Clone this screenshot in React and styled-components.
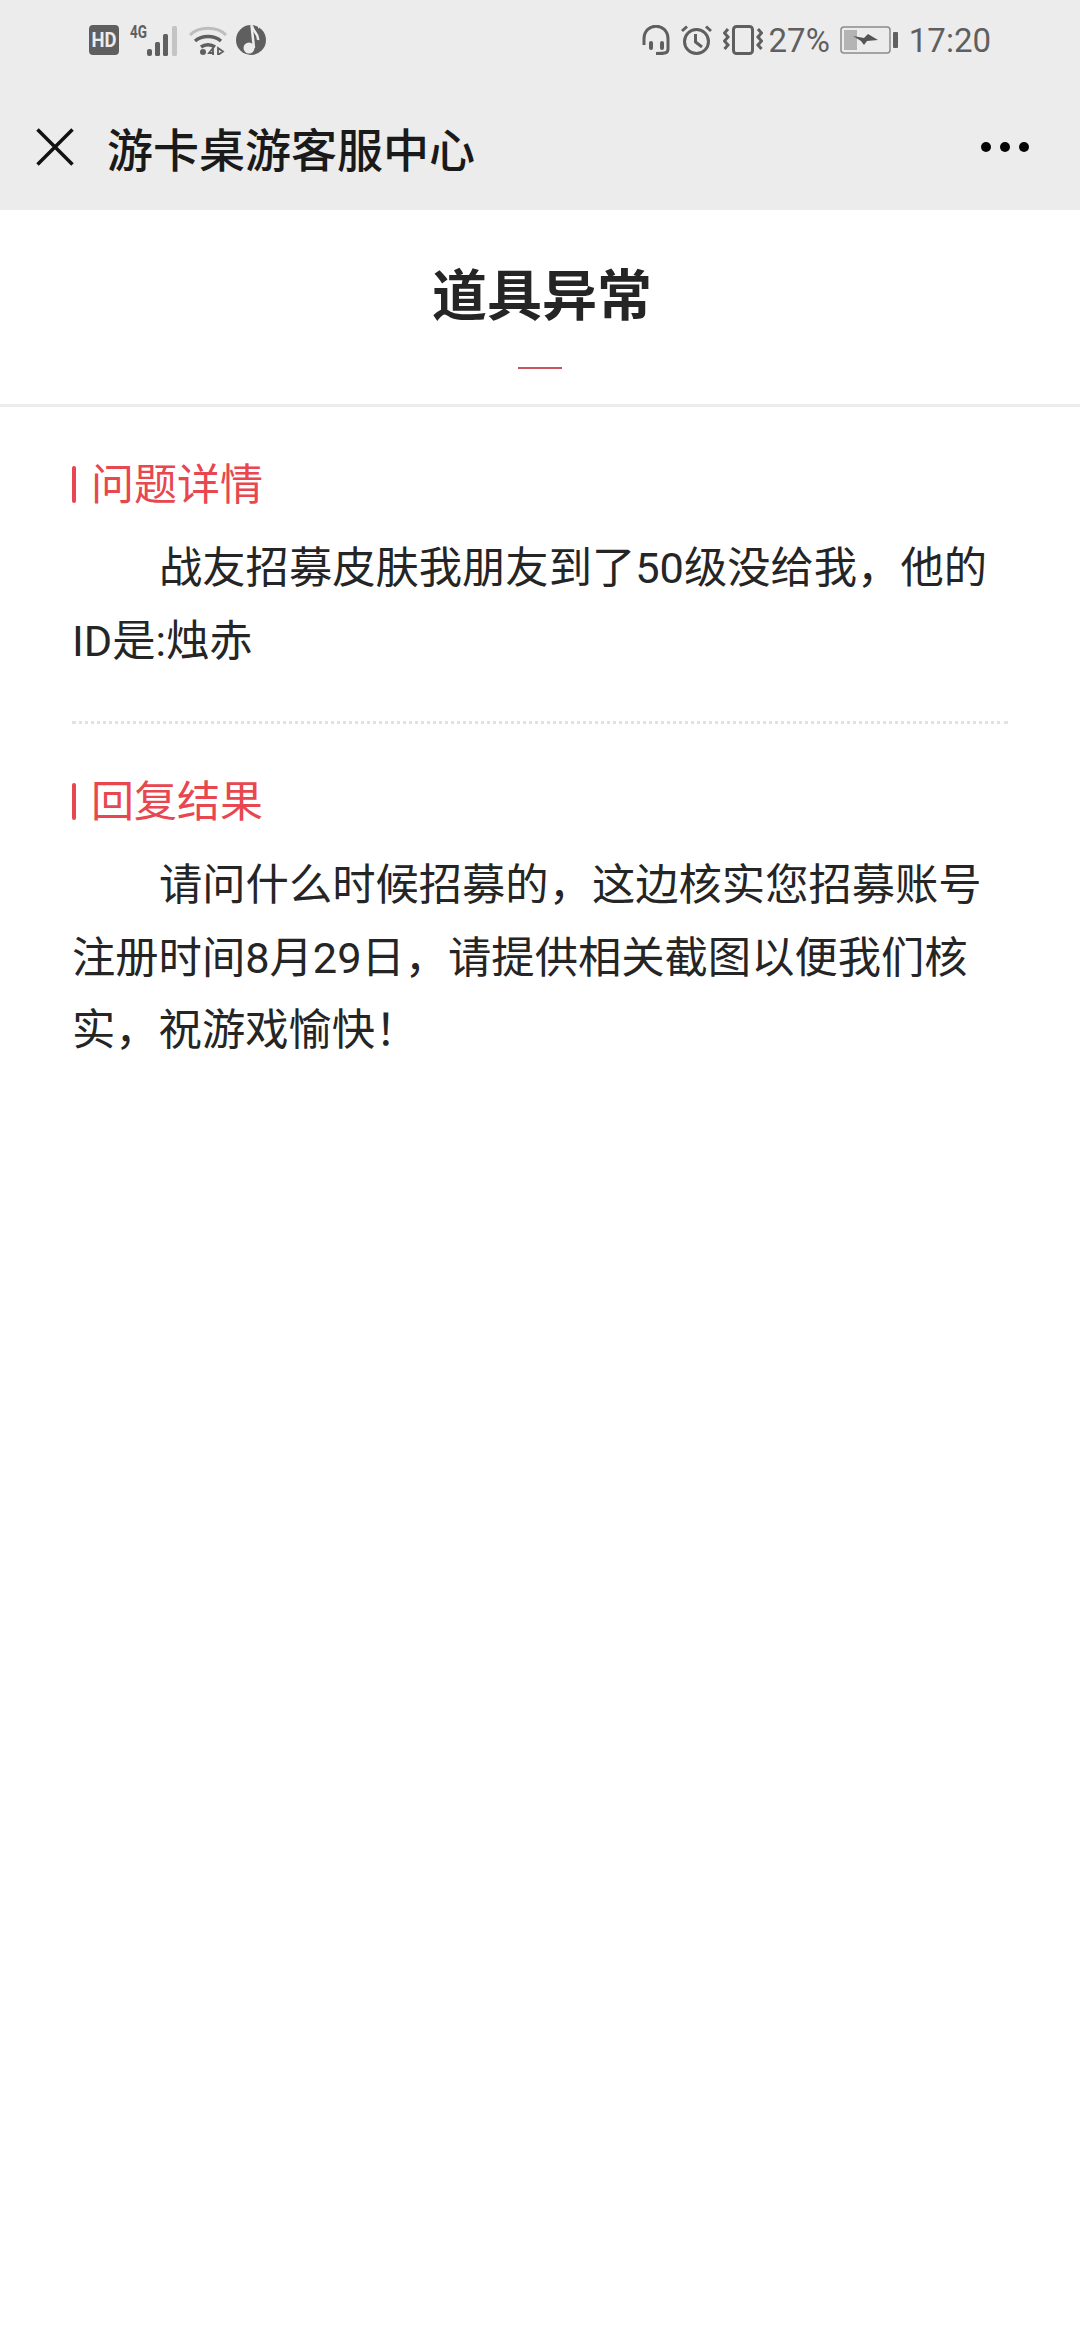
import React from 'react'
import styled, {createGlobalStyle} from 'styled-components'

const Global = createGlobalStyle`
    html, body {
        margin: 0;
        padding: 0;
        background: #fff;
    }
    body {
        font-family: Roboto, "Noto Sans CJK SC", sans-serif;
    }
`

const Page = styled.div`
    width: 1080px;
    height: 2340px;
    background: #fff;
    overflow: hidden;
`

const Top = styled.header`
    height: 210px;
    background: #ececec;
    display: flex;
    flex-direction: column;
`

const StatusBar = styled.div`
    height: 80px;
    padding: 0 89px;
    display: flex;
    align-items: center;
    justify-content: space-between;
    color: #5f5f5f;
`

const StatusGroup = styled.div`
    display: flex;
    align-items: center;
    gap: ${props => props.gap}px;
`

const StatusText = styled.span`
    font-size: 33px;
    margin-left: ${props => props.left || 0}px;
`

const NavBar = styled.div`
    flex: 1;
    display: flex;
    align-items: center;
    padding: 4px 51px 0 36px;
`

const NavTitle = styled.div`
    flex: 1;
    margin-left: 33px;
    font-size: 46px;
    font-weight: 500;
    color: #1a1a1a;
`

const Heading = styled.div`
    height: 194px;
    border-bottom: 3px solid #ececec;
    display: flex;
    flex-direction: column;
    align-items: center;
`

const HeadingText = styled.h1`
    margin: 54px 0 0 4px;
    font-size: 55px;
    line-height: 64px;
    font-weight: 700;
    color: #252525;
`

const HeadingRule = styled.div`
    width: 44px;
    height: 2px;
    margin-top: 39px;
    background: #c8565c;
`

const Content = styled.main`
    padding: 0 72px;
`

const Section = styled.section`
    padding: 55px 0 ${props => props.first ? '43px' : '0'};
    border-bottom: ${props => props.first ? '3px dotted #e2e2e2' : 'none'};
`

const Label = styled.h2`
    margin: 0;
    height: 38px;
    display: flex;
    align-items: center;
    gap: 15px;
    font-size: 43px;
    font-weight: 400;
    color: #e8474f;

    &::before {
        content: '';
        width: 4px;
        height: 37px;
        margin-top: 6px;
        border-radius: 2px;
        background: #e8474f;
    }
`

const Body = styled.p`
    margin: 33px 0 0;
    font-size: 43.3px;
    line-height: 72.5px;
    text-indent: 87px;
    color: #252525;
`

const Close = () => (
    <svg width="38" height="38" viewBox="0 0 38 38" fill="none" stroke="#111" strokeWidth="3.5">
        <path d="M1.500 1.500 L36.500 36.500 M36.500 1.500 L1.500 36.500"/>
    </svg>
)

const More = () => (
    <svg width="48" height="10" viewBox="0 0 48 10" fill="#050505">
        <circle cx="5" cy="5" r="5"/>
        <circle cx="24" cy="5" r="5"/>
        <circle cx="43" cy="5" r="5"/>
    </svg>
)

const HdIcon = () => (
    <svg width="30" height="30" viewBox="0 0 30 30">
        <rect width="30" height="30" rx="4" fill="#5f5f5f"/>
        <text x="15" y="22" textAnchor="middle" textLength="25" lengthAdjust="spacingAndGlyphs" fontFamily="Roboto, sans-serif" fontWeight="700" fontSize="20" fill="#ececec">HD</text>
    </svg>
)

const SignalIcon = () => (
    <svg width="52" height="32" viewBox="0 0 52 32" overflow="visible">
        <text x="2" y="14" textLength="17" lengthAdjust="spacingAndGlyphs" fontFamily="Roboto, sans-serif" fontWeight="700" fontSize="18" fill="#5f5f5f">4G</text>
        <rect x="19" y="25" width="5" height="7" rx="2" fill="#5f5f5f"/>
        <rect x="27" y="18" width="5" height="14" rx="1.500" fill="#5f5f5f"/>
        <rect x="35" y="10" width="5" height="22" rx="1.500" fill="#5f5f5f"/>
        <rect x="44" y="2" width="5" height="30" rx="1.500" fill="#c4c4c4"/>
    </svg>
)

const WifiIcon = () => (
    <svg width="38" height="30" viewBox="0 0 38 30" fill="none">
        <path d="M1 10C10 1 28 1 37 10" stroke="#bdbdbd" strokeWidth="3"/>
        <path d="M6 16C13 10 25 10 32 16M12 22C16 19 22 19 26 22" stroke="#5f5f5f" strokeWidth="3.500"/>
        <circle cx="14" cy="27" r="3" fill="#5f5f5f"/>
        <path d="M24 30v-7l-4 5h5M29 23v7l5-3.500z" stroke="#5f5f5f" strokeWidth="1.800"/>
    </svg>
)

const MusicIcon = () => (
    <svg width="30" height="30" viewBox="0 0 30 30">
        <circle cx="15" cy="15" r="15" fill="#5f5f5f"/>
        <path d="M15.500 0L18 23" stroke="#ececec" strokeWidth="2.500" fill="none"/>
        <circle cx="13" cy="23" r="5.500" fill="#ececec"/>
        <path d="M16 1C17 7 23 9 22 15" stroke="#ececec" strokeWidth="2.500" fill="none"/>
        <path d="M22 0L25 0L22 4Z" fill="#ececec"/>
    </svg>
)

const HeadsetIcon = () => (
    <svg width="28" height="30" viewBox="0 0 28 30" fill="none" stroke="#5f5f5f" strokeWidth="3">
        <path d="M2 20V14C2 -3 26 -3 26 14V24C26 28 24 28.500 14 28.500"/>
        <rect x="7" y="16" width="4" height="9" rx="2" fill="#5f5f5f" stroke="none"/>
        <rect x="18" y="16" width="4" height="9" rx="2" fill="#5f5f5f" stroke="none"/>
    </svg>
)

const AlarmIcon = () => (
    <svg width="31" height="30" viewBox="0 0 31 30" fill="none" stroke="#5f5f5f" strokeWidth="3">
        <circle cx="15.500" cy="16.500" r="12"/>
        <path d="M14.500 9V17L21 22M1 6L6 1.500M30 6L25 1.500"/>
    </svg>
)

const VibrateIcon = () => (
    <svg width="40" height="30" viewBox="0 0 40 30" fill="none" stroke="#5f5f5f" strokeWidth="3">
        <rect x="10.500" y="1.500" width="19" height="27" rx="3"/>
        <path d="M5 4L1.500 8L5 12L1.500 16L5 20L1.500 24M35 4L38.500 8L35 12L38.500 16L35 20L38.500 24"/>
    </svg>
)

const BatteryIcon = () => (
    <svg width="58" height="28" viewBox="0 0 58 28" fill="none">
        <rect x="1" y="1" width="49" height="26" rx="3" stroke="#8a8a8a" strokeWidth="1.500"/>
        <rect x="4" y="4" width="13" height="20" fill="#b4b4b4"/>
        <path d="M13 10L24 12L28 8L38 14L27 15L24 19L21 15Z" fill="#555"/>
        <rect x="53" y="6" width="5" height="16" rx="1" fill="#5f5f5f"/>
    </svg>
)

const App = () => (
    <Page>
        <Global/>
        <Top>
            <StatusBar>
                <StatusGroup gap={9}>
                    <HdIcon/>
                    <SignalIcon/>
                    <WifiIcon/>
                    <MusicIcon/>
                </StatusGroup>
                <StatusGroup gap={10}>
                    <StatusGroup gap={11}>
                        <HeadsetIcon/>
                        <AlarmIcon/>
                        <VibrateIcon/>
                    </StatusGroup>
                    <StatusText left={-4}>27%</StatusText>
                    <BatteryIcon/>
                    <StatusText left={1}>17:20</StatusText>
                </StatusGroup>
            </StatusBar>
            <NavBar>
                <Close/>
                <NavTitle>游卡桌游客服中心</NavTitle>
                <More/>
            </NavBar>
        </Top>
        <Heading>
            <HeadingText>道具异常</HeadingText>
            <HeadingRule/>
        </Heading>
        <Content>
            <Section first>
                <Label>问题详情</Label>
                <Body>战友招募皮肤我朋友到了50级没给我，他的ID是:烛赤</Body>
            </Section>
            <Section>
                <Label>回复结果</Label>
                <Body>请问什么时候招募的，这边核实您招募账号注册时间8月29日，请提供相关截图以便我们核实，祝游戏愉快！</Body>
            </Section>
        </Content>
    </Page>
)

export default App
